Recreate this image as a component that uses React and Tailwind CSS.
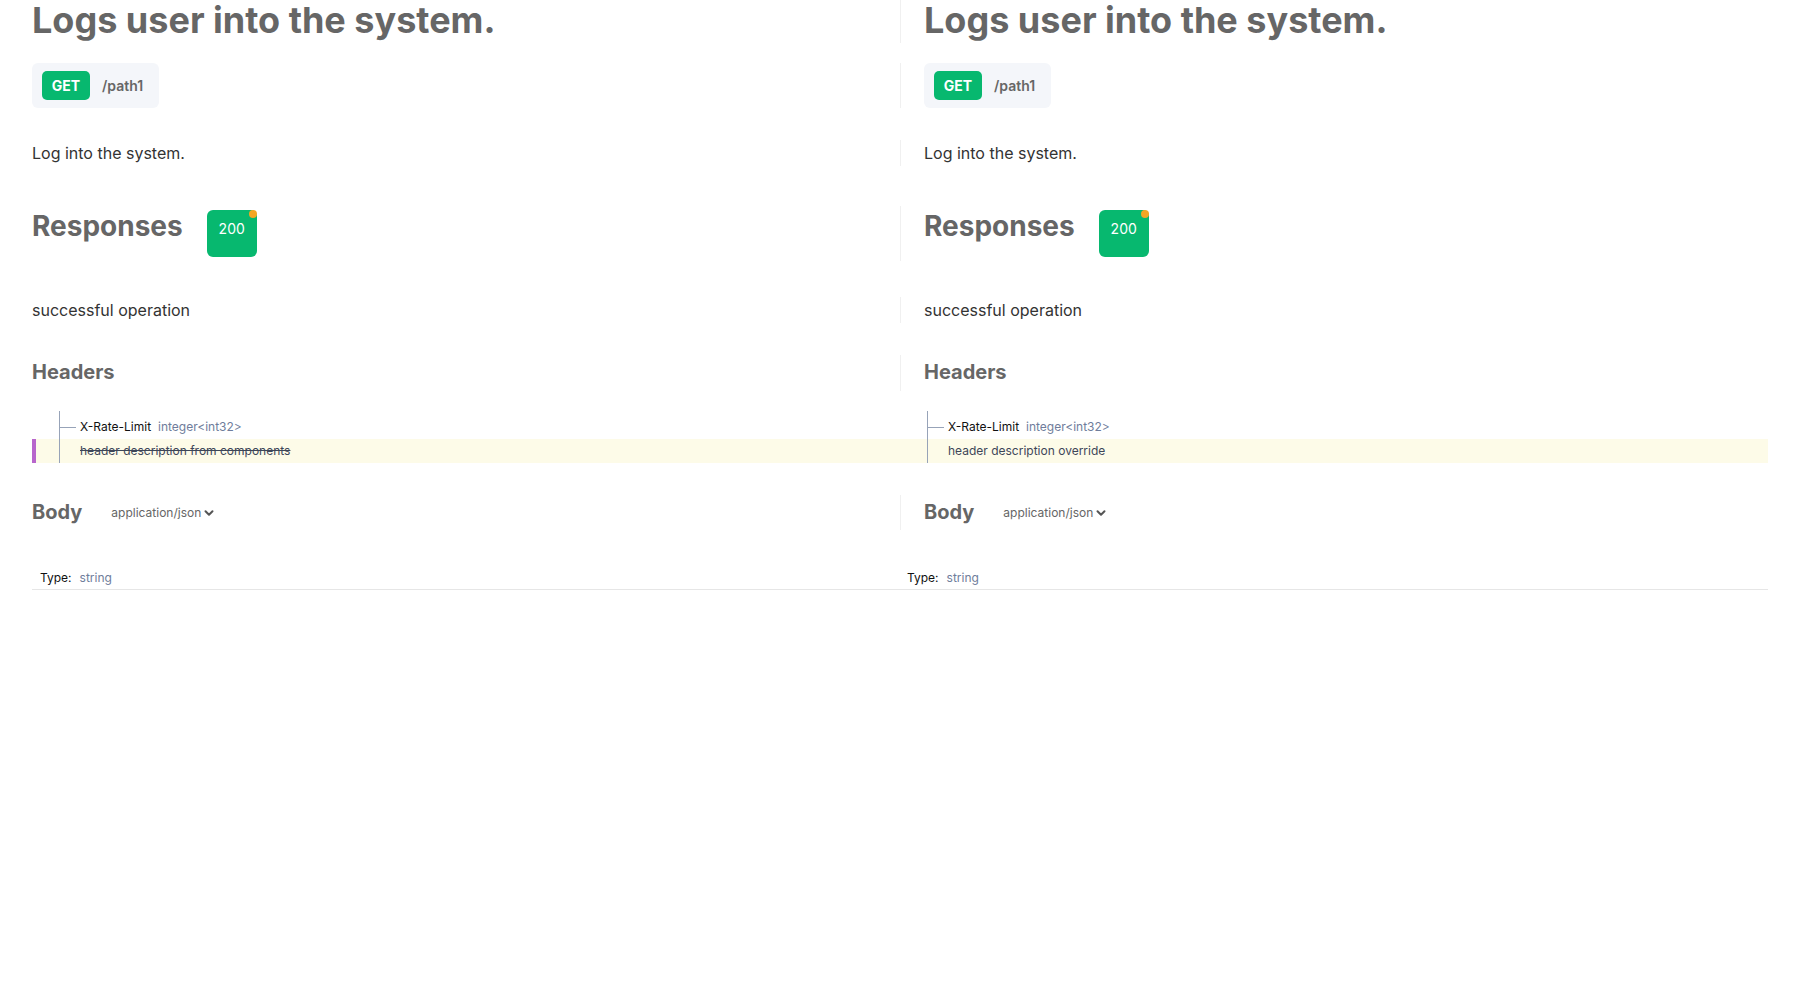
import React from 'react';

const DIVIDER = 'border-l border-[#f0f0f0] pl-[23px]';

function Row({ left, right, divider = true, className = '' }) {
  return (
    <div className={`grid grid-cols-2 ${className}`}>
      <div className="min-w-0">{left}</div>
      <div className={`min-w-0 ${divider ? DIVIDER : ''}`}>{right}</div>
    </div>
  );
}

function Title() {
  return (
    <h1 className="h-[43px] text-[36px] leading-[40px] font-bold text-[#666]">
      Logs user into the system.
    </h1>
  );
}

function Endpoint() {
  return (
    <div className="inline-flex h-[45px] items-center gap-3 rounded-md bg-[#f4f6fa] pl-[10px] pr-[16px]">
      <span className="flex h-[29px] w-[48px] items-center justify-center rounded-[5px] bg-[#07b86f] text-[14px] font-bold text-white">
        GET
      </span>
      <span className="text-[14px] font-semibold text-[#666]">/path1</span>
    </div>
  );
}

function Paragraph({ children }) {
  return <p className="h-[26px] text-[16px] leading-[26px] text-[#333]">{children}</p>;
}

function Responses() {
  return (
    <div className="flex h-[55px] items-start gap-[24px] pt-[3px]">
      <h2 className="text-[28px] font-bold leading-[34px] text-[#666]">Responses</h2>
      <div className="relative mt-px h-[47px] w-[50px] rounded-md bg-[#07b86f] pt-[9px] text-center text-[14px] leading-5 text-white">
        200
        <span className="absolute right-0 top-0 h-2 w-2 rounded-full bg-[#f5a623]" />
      </div>
    </div>
  );
}

function SectionHeading({ children }) {
  return <h3 className="h-[36px] text-[20px] font-bold leading-[34px] text-[#666]">{children}</h3>;
}

function HeaderName() {
  return (
    <div className="flex h-[28px]">
      <div className="w-[27px] shrink-0" />
      <div className="w-px bg-[#97a3b8]" />
      <div className="flex items-center pt-1">
        <div className="h-px w-[16px] bg-[#97a3b8]" />
        <span className="ml-1 text-[12px] text-[#111]">X-Rate-Limit</span>
        <span className="ml-[7px] text-[12px] text-[#6f7d9b]">integer&lt;int32&gt;</span>
      </div>
    </div>
  );
}

function HeaderDescription({ removed, children }) {
  return (
    <div className={`flex h-[24px] bg-[#fdfbe8] ${removed ? 'border-l-4 border-[#b866cc]' : ''}`}>
      <div className={`${removed ? 'w-[23px]' : 'w-[27px]'} shrink-0`} />
      <div className="w-px bg-[#97a3b8]" />
      <div className="flex items-center pl-5">
        <span className={`text-[12px] text-[#3d4658] ${removed ? 'line-through' : ''}`}>{children}</span>
      </div>
    </div>
  );
}

function Body() {
  return (
    <div className="flex h-[35px] items-center gap-[29px]">
      <h3 className="text-[20px] font-bold leading-[35px] text-[#666]">Body</h3>
      <span className="flex items-center gap-[3px] text-[12px] text-[#666]">
        application/json
        <svg width="10" height="10" viewBox="0 0 10 10" className="text-[#555]">
          <path d="M1.5 3.2 5 6.7 8.5 3.2" fill="none" stroke="currentColor" strokeWidth="2" strokeLinecap="round" strokeLinejoin="round" />
        </svg>
      </span>
    </div>
  );
}

function TypeLine({ pad }) {
  return (
    <div className={`flex h-[24px] items-center gap-2 border-b border-[#e6e6e6] ${pad} text-[12px]`}>
      <span className="text-[#111]">Type:</span>
      <span className="text-[#6f7d9b]">string</span>
    </div>
  );
}

export default function App() {
  return (
    <div className="min-h-screen bg-white px-8 font-['Inter','Liberation_Sans',sans-serif]">
      <Row left={<Title />} right={<Title />} />
      <Row className="mt-5" left={<Endpoint />} right={<Endpoint />} />
      <Row className="mt-8" left={<Paragraph>Log into the system.</Paragraph>} right={<Paragraph>Log into the system.</Paragraph>} />
      <Row className="mt-10" left={<Responses />} right={<Responses />} />
      <Row className="mt-9" left={<Paragraph>successful operation</Paragraph>} right={<Paragraph>successful operation</Paragraph>} />
      <Row className="mt-8" left={<SectionHeading>Headers</SectionHeading>} right={<SectionHeading>Headers</SectionHeading>} />
      <Row className="mt-5" divider={false} left={<HeaderName />} right={<HeaderName />} />
      <Row
        divider={false}
        left={<HeaderDescription removed>header description from components</HeaderDescription>}
        right={<HeaderDescription>header description override</HeaderDescription>}
      />
      <Row className="mt-8" left={<Body />} right={<Body />} />
      <Row className="mt-9" divider={false} left={<TypeLine pad="pl-2" />} right={<TypeLine pad="pl-[7px]" />} />
    </div>
  );
}
